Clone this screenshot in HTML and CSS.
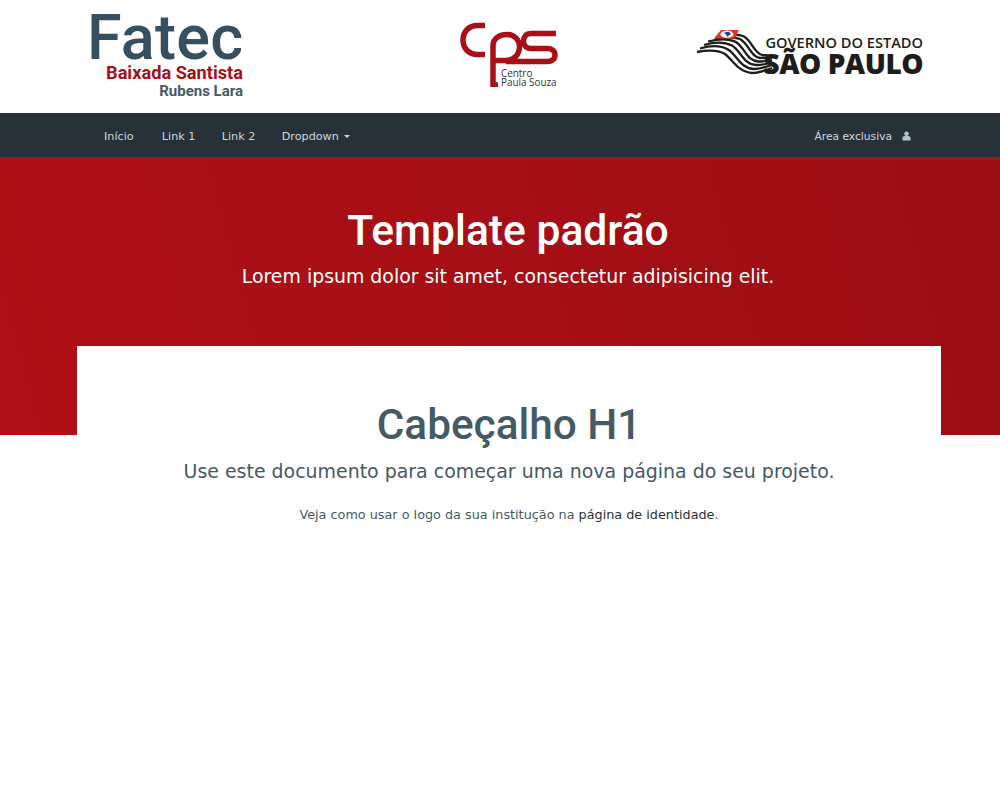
FILE: index.html
```html
<!DOCTYPE html>
<html lang="pt-BR">
<head>
<meta charset="utf-8">
<title>Template padrão</title>
<link rel="stylesheet" href="styles.css">
</head>
<body>
<header class="brand-bar">
  <div class="fatec">
    <div class="fatec-name">Fatec</div>
    <div class="fatec-city">Baixada Santista</div>
    <div class="fatec-unit">Rubens Lara</div>
  </div>
  <div class="cps">
    <svg class="cps-mark" viewBox="0 0 98 65" width="98" height="65">
      <path class="cps-stroke" d="M25 3.500H17.500C8.500 3.500 3 10 3 18C3 26 8.500 32.500 17.500 32.500H25" />
      <path class="cps-stroke" d="M38 63H33V24C33 16 40 12.500 47 12.500C54 12.500 59.500 17.500 59.500 24.500C59.500 32.500 54 38.500 46 38.500H34" />
      <path class="cps-stroke" d="M96 11.500H71C66 11.500 63.500 15 63.500 19C63.500 24 67 26.500 71 26.500H87C92 26.500 95 29 95 33C95 37 92 39.500 87 39.500H46" />
    </svg>
    <div class="cps-text">Centro<br>Paula Souza</div>
  </div>
  <div class="sp">
    <svg class="sp-mark" viewBox="0 0 80 50" width="80" height="50">
      <path class="sp-band" d="M1 24C12 22 22 22 29 26C36 31 42 44 56 45C62 45 68 43 76 40" />
      <path class="sp-band" d="M4 20.500C14 17.500 25 17.500 32 21.500C41 27 45 41 58 41C64 41 70 39 76 37" />
      <path class="sp-band" d="M8 17C18 14 28 13.500 36 17.500C45 23 48 37 60 37C65 37 71 36 76 34.500" />
      <path class="sp-band" d="M12 13.500C22 11 32 10 40 14C49 20 51 33 62 33.500C67 33.500 72 33 76 32" />
      <path class="sp-band" d="M19 11C28 9 36 8 44 11C53 16 55 29 64 30C68 30 72 30 76 29.500" />
      <path class="sp-band" d="M38 7C42 6.500 45 7 48 8.500C56 13 58 25 66 27C69 27.500 73 27.500 76 27.500" />
      <path class="sp-flag" d="M18 10.500L25 2H43L39 10.500Z" />
      <ellipse class="sp-white" cx="31" cy="6.200" rx="6.500" ry="3.600" />
      <path class="sp-blue" d="M28 4.500L33 3.800L35 6L31 8.800L30 6.500Z" />
    </svg>
    <div class="sp-text">
      <div class="sp-gov">GOVERNO DO ESTADO</div>
      <div class="sp-name">SÃO PAULO</div>
    </div>
  </div>
</header>
<nav class="navbar">
  <ul class="nav-links">
    <li><a href="#">Início</a></li>
    <li><a href="#">Link 1</a></li>
    <li><a href="#">Link 2</a></li>
    <li><a href="#">Dropdown <span class="caret"></span></a></li>
  </ul>
  <a class="nav-user" href="#">Área exclusiva
    <svg class="user-icon" viewBox="0 0 10 10" width="9" height="10"><circle cx="5" cy="2.600" r="2.500"/><path d="M0.500 10V7.500C0.500 5.800 1.800 5 3 5H7C8.200 5 9.500 5.800 9.500 7.500V10Z"/></svg>
  </a>
</nav>
<section class="hero">
  <h1 class="hero-title">Template padrão</h1>
  <p class="hero-lead">Lorem ipsum dolor sit amet, consectetur adipisicing elit.</p>
</section>
<main class="card">
  <h1 class="card-title">Cabeçalho H1</h1>
  <p class="card-lead">Use este documento para começar uma nova página do seu projeto.</p>
  <p class="card-note">Veja como usar o logo da sua institução na <a href="#">página de identidade</a>.</p>
</main>
</body>
</html>
```
FILE: styles.css
```css
* { box-sizing: border-box; }
html, body { margin: 0; padding: 0; }
body {
  background: #fff;
  font-family: "DejaVu Sans", Verdana, sans-serif;
  color: #455a64;
  font-size: 13px;
  height: 800px;
  overflow: hidden;
}
a { text-decoration: none; }

.brand-bar {
  height: 113px;
  display: flex;
  padding: 0 77px 0 90px;
  background: #fff;
}
.fatec {
  width: 153px;
  flex: none;
  text-align: right;
  font-family: Roboto, sans-serif;
  padding-top: 7px;
}
.fatec-name {
  font-size: 63px;
  line-height: 62px;
  font-weight: 500;
  color: #37505f;
  text-align: left;
  white-space: nowrap;
  letter-spacing: 0.200px;
  margin-left: -3px;
}
.fatec-city {
  font-size: 18.200px;
  line-height: 17px;
  font-weight: 700;
  color: #a80f16;
  white-space: nowrap;
  margin-top: -5px;
}
.fatec-unit {
  font-size: 15px;
  line-height: 17px;
  font-weight: 700;
  color: #455a64;
  margin-top: 2px;
  white-space: nowrap;
}
.cps {
  position: relative;
  flex: none;
  width: 98px;
  height: 65px;
  margin: 22px 0 0 217px;
}
.cps-mark { display: block; }
.cps-stroke { fill: none; stroke: #a80f16; stroke-width: 5.500; }
.cps-text {
  position: absolute;
  left: 41px;
  top: 47px;
  font-family: "Open Sans", sans-serif;
  font-size: 9.900px;
  line-height: 8.500px;
  color: #333;
  white-space: nowrap;
}
.sp {
  position: relative;
  flex: none;
  width: 227px;
  height: 52px;
  margin: 28px 0 0 auto;
}
.sp-mark { display: block; }
.sp-flag { fill: #e3342a; }
.sp-white { fill: #fff; }
.sp-blue { fill: #1f3f8f; }
.sp-band { fill: none; stroke: #1d1d1b; stroke-width: 2.300; }
.sp-text {
  position: absolute;
  right: 0;
  top: 0;
  font-family: "Open Sans", sans-serif;
  color: #1d1d1b;
  text-align: right;
}
.sp-gov { font-size: 14.600px; line-height: 15px; margin-top: 7px; font-weight: 600; white-space: nowrap; }
.sp-name { font-size: 28px; line-height: 26px; font-weight: 800; white-space: nowrap; letter-spacing: -0.500px; }

.navbar {
  height: 44px;
  background: #263238;
  display: flex;
  justify-content: space-between;
  align-items: center;
  padding: 2px 89px 0 90px;
}
.nav-links {
  list-style: none;
  display: flex;
  margin: 0;
  padding: 0;
}
.nav-links a {
  display: block;
  padding: 0 13.200px;
  color: #cfd8dc;
  font-size: 11.200px;
}
.nav-links li:first-child a { padding: 0 15px 0 14px; }
.caret {
  display: inline-block;
  margin-left: 2px;
  vertical-align: middle;
  border-top: 3px solid #cfd8dc;
  border-left: 3px solid transparent;
  border-right: 3px solid transparent;
}
.nav-user { color: #cfd8dc; font-size: 10.700px; display: flex; align-items: center; gap: 10px; }
.user-icon { fill: #b0c4d2; }

.hero {
  height: 278px;
  background: linear-gradient(75deg, #b01017 0%, #a60f15 50%, #9b0d13 100%);
  border-top: 3px solid #a80f16;
  text-align: center;
  color: #fff;
  padding: 47px 0 0 16px;
}
.hero-title {
  margin: 0;
  font-family: Roboto, sans-serif;
  font-size: 42.600px;
  line-height: 46px;
  font-weight: 500;
}
.hero-lead {
  margin: 10px 0 0;
  font-size: 18.900px;
  line-height: 26px;
}
.card {
  position: absolute;
  left: 77px;
  top: 346px;
  width: 864px;
  min-height: 200px;
  background: #fff;
  text-align: center;
  padding-top: 56px;
}
.card-title {
  margin: 0;
  font-family: Roboto, sans-serif;
  font-size: 42.300px;
  line-height: 46px;
  font-weight: 500;
  color: #455a64;
}
.card-lead {
  margin: 10px 0 0;
  font-size: 18.950px;
  line-height: 26px;
}
.card-note {
  margin: 22px 0 0;
  font-size: 12.800px;
  line-height: 18px;
}
.card-note a { color: #263238; }
```
